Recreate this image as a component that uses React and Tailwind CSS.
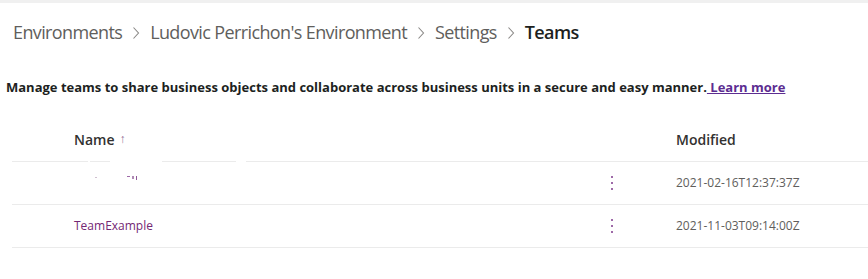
import React from "react";

const font = { fontFamily: '"Open Sans", "Noto Sans", sans-serif' };

function Chevron() {
  return (
    <svg width="10" height="16" viewBox="0 0 10 16" className="mx-[9px] mt-[2px]">
      <path d="M2.5 2.5 L7.5 8 L2.5 13.5" fill="none" stroke="#8a8886" strokeWidth="1.1" />
    </svg>
  );
}

function Dots() {
  return (
    <div className="flex flex-col gap-[4px] items-center">
      <span className="block w-[2px] h-[2px] bg-[#9e6aa8]" />
      <span className="block w-[2px] h-[2px] bg-[#9e6aa8]" />
      <span className="block w-[2px] h-[2px] bg-[#9e6aa8]" />
    </div>
  );
}

export default function App() {
  return (
    <div className="w-[868px] h-[279px] bg-white overflow-hidden relative" style={font}>
      <div className="h-[3px] bg-[#f0f0f0]" />
      <div className="flex items-center pl-[13px] pt-[15px] h-[28px] box-content text-[18px] text-[#605e5c] tracking-[-0.62px]">
        <span>Environments</span>
        <Chevron />
        <span>Ludovic Perrichon's Environment</span>
        <Chevron />
        <span>Settings</span>
        <Chevron />
        <span className="font-semibold text-[#201f1e]">Teams</span>
      </div>
      <div className="pl-[6px] mt-[32px] text-[13px] font-bold text-[#201f1e] leading-[18px] tracking-[0px]">
        Manage teams to share business objects and collaborate across business units in a secure and easy manner.
        <a className="text-[#5c2d91] underline"> Learn more</a>
      </div>
      <div className="ml-[12px] mt-[27px]">
        <div className="flex items-center h-[32px] text-[14px] font-semibold text-[#323130]">
          <div className="w-[62px]" />
          <div className="flex items-center w-[602px]">
            Name
            <span className="ml-[5px] text-[12px] font-normal text-[#8f6b94]">↑</span>
          </div>
          <div>Modified</div>
        </div>
        <div className="relative h-[7px] border-b border-[#ebebeb]">
          <div className="absolute left-[76px] bottom-[-1px] w-[2px] h-[1px] bg-white" />
          <div className="absolute left-[98px] bottom-[-1px] w-[52px] h-[1px] bg-white" />
          <div className="absolute left-[224px] bottom-[-1px] w-[10px] h-[1px] bg-white" />
        </div>
        <div className="flex items-center h-[43px] border-b border-[#ebebeb] text-[12px]">
          <div className="w-[62px]" />
          <div className="w-[532px] relative h-full">
            <span className="absolute left-[21px] top-[15px] w-[2px] h-[1px] bg-[#d0c0d0]" />
            <span className="absolute left-[53px] top-[14px] w-[3px] h-[1px] bg-[#9e6aa8]" />
            <span className="absolute left-[58px] top-[14px] w-[2px] h-[3px] bg-[#b08ab5]" />
            <span className="absolute left-[62px] top-[14px] w-[1px] h-[4px] bg-[#8f5a98]" />
          </div>
          <div className="w-[12px] flex justify-center">
            <Dots />
          </div>
          <div className="w-[58px]" />
          <div className="text-[#605e5c]">2021-02-16T12:37:37Z</div>
        </div>
        <div className="flex items-center h-[43px] border-b border-[#ebebeb] text-[12px]">
          <div className="w-[62px]" />
          <div className="w-[532px] text-[#742774]">TeamExample</div>
          <div className="w-[12px] flex justify-center">
            <Dots />
          </div>
          <div className="w-[58px]" />
          <div className="text-[#605e5c]">2021-11-03T09:14:00Z</div>
        </div>
      </div>
    </div>
  );
}
